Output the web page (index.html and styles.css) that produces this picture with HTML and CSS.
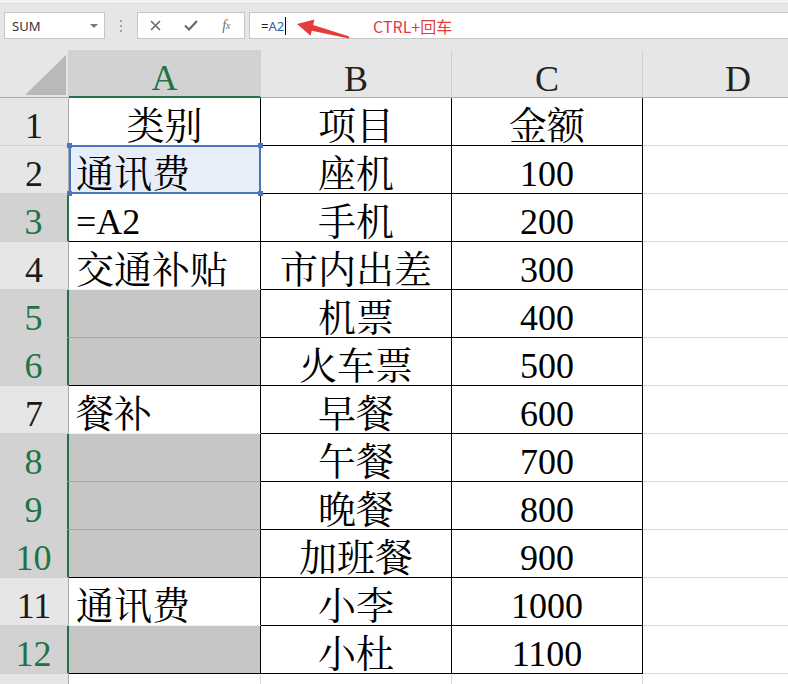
FILE: index.html
```html
<!DOCTYPE html>
<html lang="zh-CN">
<head>
    <meta charset="UTF-8">
    <title>定位空值 - 填充</title>
    <link rel="stylesheet" href="styles.css">
</head>
<body>
    <div class="toolbar">
        <div class="name-box">
            <span>SUM</span>
            <span class="caret"></span>
        </div>
        <div class="grip"><i></i><i></i><i></i></div>
        <div class="fx-buttons">
            <span class="fx-btn">
                <svg width="11" height="11" viewBox="0 0 11 11"><path d="M1 1 L10 10 M10 1 L1 10" stroke="#6b6b6b" stroke-width="1.6"/></svg>
            </span>
            <span class="fx-btn">
                <svg width="14" height="11" viewBox="0 0 14 11"><path d="M1 5.5 L5 9.5 L13 1" stroke="#6b6b6b" stroke-width="2.2" fill="none"/></svg>
            </span>
            <span class="fx-btn fx-label">f<sub>x</sub></span>
        </div>
        <div class="formula">
            <span class="eq">=</span><span class="ref-text">A2</span><span class="cursor"></span>
            <!-- annotation drawn over the screenshot -->
            <svg class="arrow" width="62" height="28" viewBox="290 13 62 28">
                <polygon points="296,24 313.4,19.6 312.2,25 348.2,36.4 347.8,38.6 310.8,30.8 309.6,35.8" fill="#e63b3b"/>
            </svg>
            <span class="note">CTRL+回车</span>
        </div>
    </div>

    <div class="sheet">
        <div class="corner">
            <svg width="68" height="47" viewBox="0 0 68 47"><polygon points="25,45 66,45 66,5" fill="#b9b9b9"/></svg>
        </div>
        <div class="col-head sel">A</div>
        <div class="col-head">B</div>
        <div class="col-head">C</div>
        <div class="col-head">D</div>

        <div class="row-head">1</div>
        <div class="cell mid zh">类别</div>
        <div class="cell mid zh">项目</div>
        <div class="cell mid zh">金额</div>
        <div class="cell grid"></div>

        <div class="row-head">2</div>
        <div class="cell left zh ref">通讯费<span class="ref-frame"><i class="h tl"></i><i class="h tr"></i><i class="h bl"></i><i class="h br"></i></span></div>
        <div class="cell mid zh">座机</div>
        <div class="cell mid">100</div>
        <div class="cell grid"></div>

        <div class="row-head sel">3</div>
        <div class="cell left">=A2</div>
        <div class="cell mid zh">手机</div>
        <div class="cell mid">200</div>
        <div class="cell grid"></div>

        <div class="row-head">4</div>
        <div class="cell left zh pale">交通补贴</div>
        <div class="cell mid zh">市内出差</div>
        <div class="cell mid">300</div>
        <div class="cell grid"></div>

        <div class="row-head sel">5</div>
        <div class="cell fill soft"></div>
        <div class="cell mid zh">机票</div>
        <div class="cell mid">400</div>
        <div class="cell grid"></div>

        <div class="row-head sel">6</div>
        <div class="cell fill"></div>
        <div class="cell mid zh">火车票</div>
        <div class="cell mid">500</div>
        <div class="cell grid"></div>

        <div class="row-head">7</div>
        <div class="cell left zh pale">餐补</div>
        <div class="cell mid zh">早餐</div>
        <div class="cell mid">600</div>
        <div class="cell grid"></div>

        <div class="row-head sel">8</div>
        <div class="cell fill soft"></div>
        <div class="cell mid zh">午餐</div>
        <div class="cell mid">700</div>
        <div class="cell grid"></div>

        <div class="row-head sel">9</div>
        <div class="cell fill soft"></div>
        <div class="cell mid zh">晚餐</div>
        <div class="cell mid">800</div>
        <div class="cell grid"></div>

        <div class="row-head sel">10</div>
        <div class="cell fill"></div>
        <div class="cell mid zh">加班餐</div>
        <div class="cell mid">900</div>
        <div class="cell grid"></div>

        <div class="row-head">11</div>
        <div class="cell left zh pale">通讯费</div>
        <div class="cell mid zh">小李</div>
        <div class="cell mid">1000</div>
        <div class="cell grid"></div>

        <div class="row-head sel">12</div>
        <div class="cell fill"></div>
        <div class="cell mid zh">小杜</div>
        <div class="cell mid">1100</div>
        <div class="cell grid"></div>

        <!-- row 13 only peeks in at the bottom edge -->
        <div class="row-head"></div>
        <div class="cell grid"></div>
        <div class="cell grid"></div>
        <div class="cell grid"></div>
        <div class="cell grid"></div>
    </div>
</body>
</html>
```

FILE: styles.css
```css
body {
    margin: 0;
    width: 788px;
    height: 684px;
    overflow: hidden;
    background: #fff;
    font-family: "Liberation Serif", "Noto Serif CJK SC", "Noto Sans CJK SC", serif;
}

/* formula bar */
.toolbar {
    display: flex;
    align-items: flex-start;
    height: 50px;
    padding-top: 12px;
    box-sizing: border-box;
    background: linear-gradient(#f3f3f3 0, #f3f3f3 3px, #d9d9d9 3px, #d9d9d9 4px, #e6e6e6 4px);
}
.name-box {
    display: flex;
    align-items: center;
    justify-content: space-between;
    margin-left: 4px;
    width: 101px;
    height: 27px;
    padding: 0 6px 0 7px;
    box-sizing: border-box;
    background: #fff;
    border: 1px solid #c6c6c6;
    font: 13px "Noto Sans", "Open Sans", sans-serif;
    color: #333;
}
.caret {
    width: 0;
    height: 0;
    border-left: 4px solid transparent;
    border-right: 4px solid transparent;
    border-top: 4px solid #7a7a7a;
}
.grip {
    display: flex;
    flex-direction: column;
    align-items: center;
    justify-content: center;
    gap: 3px;
    width: 32px;
    height: 27px;
}
.grip i {
    width: 2px;
    height: 2px;
    background: #a3a3a3;
}
.fx-buttons {
    display: flex;
    width: 108px;
    height: 27px;
    box-sizing: border-box;
    background: #fff;
    border: 1px solid #c6c6c6;
}
.fx-btn {
    display: flex;
    align-items: center;
    justify-content: center;
    width: 36px;
}
.fx-label {
    font: italic 14px "Liberation Serif", serif;
    color: #6b6b6b;
}
.fx-label sub {
    font-size: 10px;
    vertical-align: -1px;
}
.formula {
    position: relative;
    display: flex;
    align-items: center;
    flex: 1;
    margin-left: 4px;
    height: 27px;
    padding-left: 11px;
    box-sizing: border-box;
    background: #fff;
    border: 1px solid #c6c6c6;
    border-right: none;
    font: 13px "Noto Sans", "Open Sans", sans-serif;
    color: #222;
}
.ref-text {
    color: #2f5ea8;
}
.cursor {
    width: 1px;
    height: 18px;
    margin-left: 1px;
    background: #000;
}
.arrow {
    position: absolute;
    left: 41px;
    top: 0;
}
.note {
    position: absolute;
    left: 123px;
    top: 1px;
    font: 16px "Noto Sans CJK SC", "Noto Sans", sans-serif;
    color: #e63b3b;
}

/* sheet grid: column D runs on past the window's right edge */
.sheet {
    display: grid;
    grid-template-columns: 69px 192px 191px 191px 191px;
    grid-auto-rows: 48px;
}
.corner {
    background: #e6e6e6;
    border-right: 1px solid #d0d0d0;
    border-bottom: 1px solid #ababab;
    box-sizing: border-box;
}
.corner svg {
    display: block;
}
.col-head {
    display: flex;
    align-items: center;
    justify-content: center;
    padding-top: 10px;
    box-sizing: border-box;
    background: #e6e6e6;
    border-right: 1px solid #d0d0d0;
    border-bottom: 1px solid #ababab;
    font-size: 36px;
    color: #222;
}
.col-head.sel {
    background: #d2d2d2;
    color: #217346;
    border-bottom: 2px solid #217346;
}
.row-head {
    display: flex;
    align-items: center;
    justify-content: center;
    padding-top: 9px;
    box-sizing: border-box;
    background: #e6e6e6;
    border-right: 1px solid #ababab;
    border-bottom: 1px solid #d0d0d0;
    font-size: 36px;
    color: #1a1a1a;
}
.row-head.sel {
    background: #d2d2d2;
    color: #217346;
    border-right: 2px solid #217346;
}
.cell {
    display: flex;
    align-items: center;
    padding-top: 9px;
    box-sizing: border-box;
    border-right: 1px solid #000;
    border-bottom: 1px solid #000;
    font-size: 36px;
    line-height: 1;
    color: #000;
    white-space: nowrap;
}
.cell.zh {
    font-size: 38px;
}
.cell.left {
    padding-left: 7px;
}
.cell.mid {
    justify-content: center;
}
.cell.fill {
    background: #c6c6c6;
}
.cell.soft {
    border-bottom-color: #a8a8a8;
}
.cell.pale {
    border-bottom-color: #f0f0f0;
}
.cell.grid {
    border-right-color: #d9d9d9;
    border-bottom-color: #d9d9d9;
}
.cell.ref {
    position: relative;
    background: #e7eef9;
}
.ref-frame {
    position: absolute;
    left: 0;
    top: -1px;
    right: -1px;
    bottom: -1px;
    border: 2px solid #4a76bd;
}
.ref-frame .h {
    position: absolute;
    width: 5px;
    height: 5px;
    background: #4a76bd;
}
.h.tl { left: -4px; top: -4px; }
.h.tr { right: -4px; top: -4px; }
.h.bl { left: -4px; bottom: -4px; }
.h.br { right: -4px; bottom: -4px; }
```
